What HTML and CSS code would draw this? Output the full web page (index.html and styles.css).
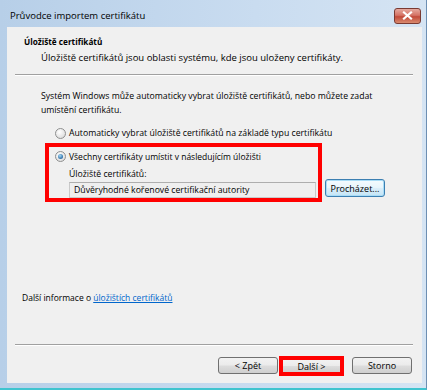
FILE: index.html
```html
<!DOCTYPE html>
<html lang="cs">
<head>
  <meta charset="UTF-8" />
  <title>Průvodce importem certifikátu</title>
  <link rel="stylesheet" href="styles.css">
</head>
<body>

  <!-- okno průvodce -->
  <div class="window">
    <div class="titlebar">
      <span class="title">Průvodce importem certifikátu</span>
      <button class="close" aria-label="Zavřít">
        <svg width="11" height="9" viewBox="0 0 11 9">
          <path d="M2 1.5 L9 7.5 M9 1.5 L2 7.5" stroke="#fff" stroke-width="2.2" stroke-linecap="square"/>
        </svg>
      </button>
    </div>

    <div class="client">
      <!-- hlavička stránky -->
      <div class="header">
        <div class="h-title">Úložiště certifikátů</div>
        <div class="h-sub">Úložiště certifikátů jsou oblasti systému, kde jsou uloženy certifikáty.</div>
      </div>
      <div class="sep"></div>

      <!-- obsah -->
      <div class="content">
        <p class="intro">Systém Windows může automaticky vybrat úložiště certifikátů, nebo můžete zadat umístění certifikátu.</p>

        <label class="radio-row first">
          <span class="radio"></span>
          <span>Automaticky vybrat úložiště certifikátů na základě typu certifikátu</span>
        </label>

        <div class="store-row">
          <div class="marked-box">
            <label class="radio-row">
              <span class="radio checked"></span>
              <span class="tight">Všechny certifikáty umístit v následujícím úložišti</span>
            </label>
            <div class="field-label">Úložiště certifikátů:</div>
            <div class="field">Důvěryhodné kořenové certifikační autority</div>
          </div>
          <button class="btn browse">Procházet...</button>
        </div>

        <div class="more">Další informace o <a href="#">úložištích certifikátů</a></div>
      </div>

      <div class="sep"></div>

      <!-- tlačítka -->
      <div class="footer">
        <button class="btn">&lt; Zpět</button>
        <button class="btn marked">Další &gt;</button>
        <button class="btn cancel">Storno</button>
      </div>
    </div>
  </div>

</body>
</html>
```

FILE: styles.css
```css
/* základ */
html, body {
  margin: 0;
  padding: 0;
  background: #fff;
  font-family: 'Open Sans', 'Noto Sans', sans-serif;
  font-size: 8.7px;
  color: #000;
}

/* rám okna */
.window {
  width: 426px;
  height: 388px;
  display: flex;
  flex-direction: column;
  background: linear-gradient(to right, #b7cfe8, #c9dcf0 60%, #d5e4f3);
  border-right: 1px solid #6d8fb3;
  border-bottom: 2px solid #3fc4cf;
}

/* titulek */
.titlebar {
  height: 27px;
  display: flex;
  align-items: center;
  justify-content: space-between;
  padding: 3px 5px 0 10px;
  box-sizing: border-box;
}

.title {
  font-size: 9.5px;
  color: #000;
  margin-top: 1px;
}

.close {
  width: 27px;
  height: 16px;
  padding: 0;
  border: 1px solid #7a3a32;
  border-radius: 3px;
  background: linear-gradient(#e5a99f, #d57365 45%, #c24a3a 55%, #d98a6e);
  display: flex;
  align-items: center;
  justify-content: center;
  margin-top: 1px;
}

/* klientská oblast */
.client {
  flex: 1;
  margin: 0 4px 5px 7px;
  background: #f0f0f0;
  display: flex;
  flex-direction: column;
}

.header {
  padding: 8px 0 0 17px;
  height: 39px;
  box-sizing: border-box;
}

.h-title {
  font-weight: bold;
  font-size: 8.2px;
  line-height: 13px;
}

.h-sub {
  padding-left: 17px;
  margin-top: 3px;
  font-size: 9.5px;
  line-height: 13px;
}

/* oddělovač */
.sep {
  height: 1px;
  margin: 8px 9px 0 8px;
  background: #a0a0a0;
  border-bottom: 1px solid #fff;
}

.content {
  flex: 1;
  padding: 13px 0 0 34px;
}

.intro {
  margin: 0;
  width: 345px;
  line-height: 14px;
}

.radio-row {
  display: flex;
  align-items: center;
  gap: 3px;
  height: 14px;
}

.radio-row.first {
  margin: 9px 0 0 14px;
}

.tight {
  font-size: 8.5px;
}

.radio {
  width: 9px;
  height: 9px;
  border-radius: 50%;
  border: 1px solid #8e8f8f;
  background: radial-gradient(circle at 40% 35%, #fff, #e1e1e1 70%, #cfcfcf);
  position: relative;
}

.radio.checked::after {
  content: "";
  position: absolute;
  left: 2px;
  top: 2px;
  width: 5px;
  height: 5px;
  border-radius: 50%;
  background: radial-gradient(circle at 40% 35%, #a7d9f5, #2d6fa8 70%, #1a4f86);
}

/* červeně označená skupina */
.store-row {
  display: flex;
  align-items: flex-end;
  gap: 3px;
  margin: 3px 0 0 4px;
}

.marked-box {
  width: 263px;
  border: 4px solid #f00;
  padding: 2px 0 0 6px;
  box-sizing: content-box;
}

.marked-box .radio-row {
  margin-left: 0;
}

.field-label {
  margin: 5px 0 0 14px;
  line-height: 13px;
}

.field {
  margin: 1px 0 0 14px;
  height: 16px;
  line-height: 15px;
  border: 1px solid #c9c9c9;
  border-top-color: #aeaeae;
  background: #efefef;
  padding-left: 4px;
  box-sizing: border-box;
  width: 247px;
}

/* tlačítka */
.btn {
  font-family: inherit;
  font-size: 9px;
  color: #000;
  width: 60px;
  height: 17px;
  padding: 0;
  border: 1px solid #707070;
  border-radius: 3px;
  background: linear-gradient(#f2f2f2, #ebebeb 48%, #dddddd 52%, #cfcfcf);
  box-sizing: border-box;
}

.browse {
  border-color: #3c7fb1;
  height: 18px;
  margin-bottom: 5px;
  box-shadow: inset 0 0 0 1px #a9dcf6;
  background: linear-gradient(#f4fbfe, #e8f5fc 48%, #dbeefa 52%, #c4e5f6);
}

.more {
  margin: 89px 0 0 -19px;
  line-height: 13px;
  font-size: 8.5px;
}

.more a {
  color: #0066cc;
}

.footer {
  display: flex;
  justify-content: flex-end;
  align-items: flex-start;
  padding: 11px 10px 0 0;
  height: 37px;
  box-sizing: border-box;
}

.footer .marked {
  width: 65px;
  height: 20px;
  border: 4px solid #f00;
  border-radius: 0;
  margin: -1px 0 0 1px;
  line-height: 11px;
}

.footer .cancel {
  margin-left: 8px;
}
```
